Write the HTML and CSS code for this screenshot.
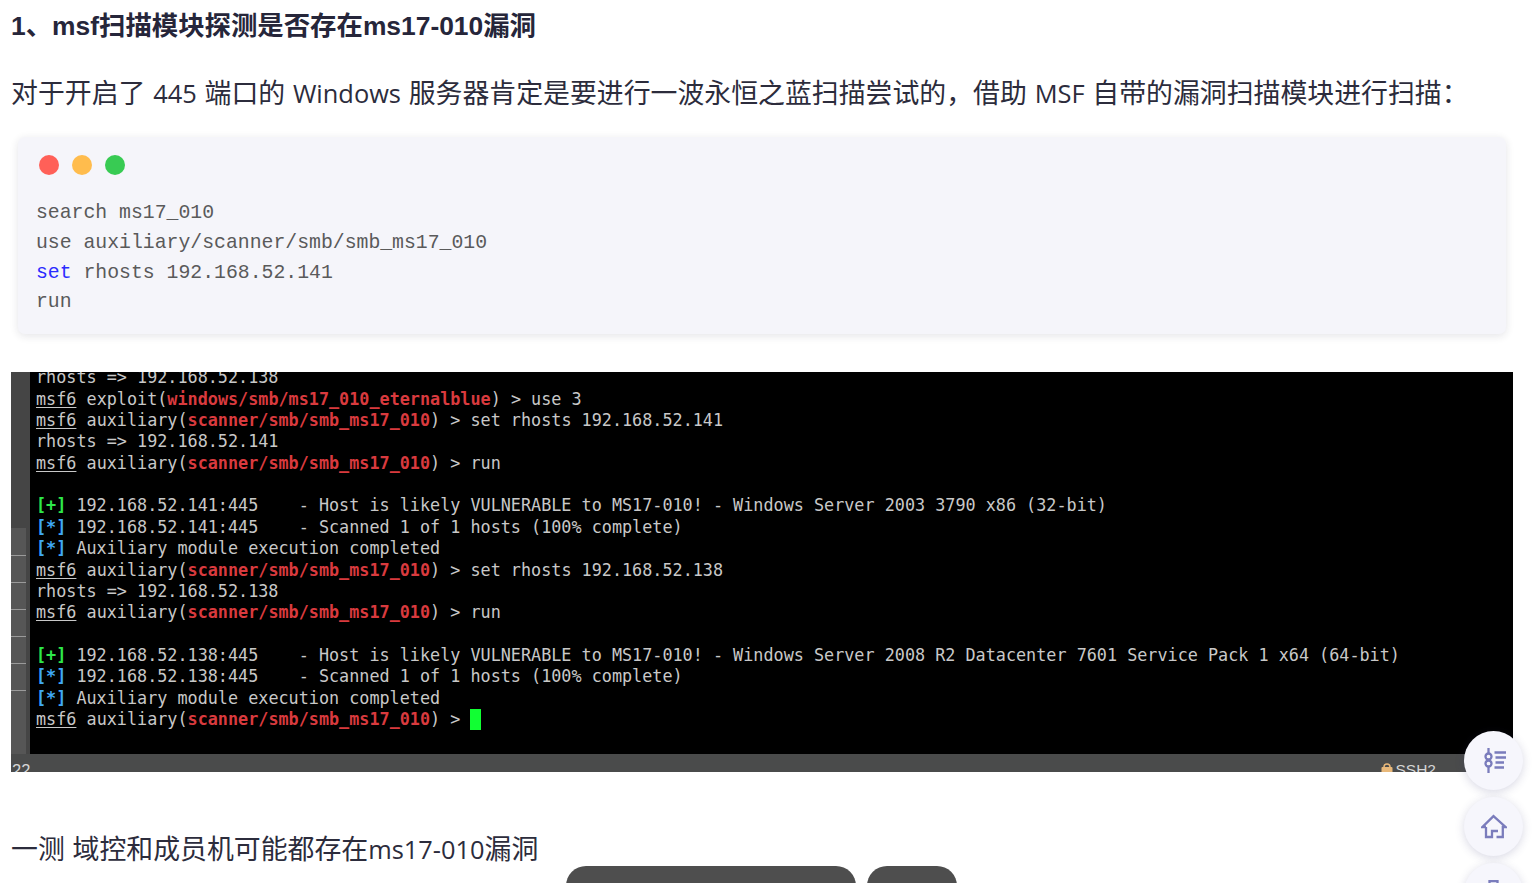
FILE: index.html
```html
<!DOCTYPE html>
<html lang="zh-CN">
<head>
<meta charset="utf-8">
<title>ms17-010</title>
<link rel="stylesheet" href="styles.css">
</head>
<body>
<main class="article">
  <h3 class="heading">1、msf扫描模块探测是否存在ms17-010漏洞</h3>
  <p class="para">对于开启了 <span class="lat">445</span> 端口的 <span class="lat">Windows</span> 服务器肯定是要进行一波永恒之蓝扫描尝试的，借助 <span class="lat">MSF</span> 自带的漏洞扫描模块进行扫描：</p>
  <div class="code-card">
    <div class="dots"><i class="dot red"></i><i class="dot yellow"></i><i class="dot green"></i></div>
    <pre class="code">search ms17_010
use auxiliary/scanner/smb/smb_ms17_010
<span class="kw">set</span> rhosts 192.168.52.141
run</pre>
  </div>
  <div class="terminal">
    <div class="term-main">
      <div class="gutter"><div class="panel"><i></i><i></i><i></i><i></i><i></i><i></i></div></div>
      <pre class="term">rhosts =&gt; 192.168.52.138
<u>msf6</u> exploit(<b class="r">windows/smb/ms17_010_eternalblue</b>) &gt; use 3
<u>msf6</u> auxiliary(<b class="r">scanner/smb/smb_ms17_010</b>) &gt; set rhosts 192.168.52.141
rhosts =&gt; 192.168.52.141
<u>msf6</u> auxiliary(<b class="r">scanner/smb/smb_ms17_010</b>) &gt; run

<b class="g">[+]</b> 192.168.52.141:445    - Host is likely VULNERABLE to MS17-010! - Windows Server 2003 3790 x86 (32-bit)
<b class="b">[*]</b> 192.168.52.141:445    - Scanned 1 of 1 hosts (100% complete)
<b class="b">[*]</b> Auxiliary module execution completed
<u>msf6</u> auxiliary(<b class="r">scanner/smb/smb_ms17_010</b>) &gt; set rhosts 192.168.52.138
rhosts =&gt; 192.168.52.138
<u>msf6</u> auxiliary(<b class="r">scanner/smb/smb_ms17_010</b>) &gt; run

<b class="g">[+]</b> 192.168.52.138:445    - Host is likely VULNERABLE to MS17-010! - Windows Server 2008 R2 Datacenter 7601 Service Pack 1 x64 (64-bit)
<b class="b">[*]</b> 192.168.52.138:445    - Scanned 1 of 1 hosts (100% complete)
<b class="b">[*]</b> Auxiliary module execution completed
<u>msf6</u> auxiliary(<b class="r">scanner/smb/smb_ms17_010</b>) &gt; <i class="cursor"></i></pre>
    </div>
    <div class="statusbar">
      <span class="st-num">22</span>
      <span class="st-ssh"><svg class="lock" viewBox="0 0 12 12"><path d="M3 5V4a3 3 0 0 1 6 0v1" fill="none" stroke="#e8b87a" stroke-width="1.5"/><rect x="0.500" y="4" width="11" height="8" rx="1" fill="#e8b87a"/></svg>SSH2</span>
    </div>
  </div>
  <p class="para para-last">一测 域控和成员机可能都存在<span class="lat">ms17-010</span>漏洞</p>
</main>
<div class="pill pill-wide"></div>
<div class="pill pill-small"></div>
<div class="fabs">
  <button class="fab" aria-label="目录"><svg viewBox="0 0 26 26" class="fab-icon"><path d="M7.500 0v25"/><circle cx="7.500" cy="8.500" r="3" fill="#f6f6fc"/><circle cx="7.500" cy="15.500" r="3" fill="#f6f6fc"/><path d="M13.500 4.500H25M14.500 9.500H25M14.500 14.500H23M13.500 19.500H23"/></svg></button>
  <button class="fab" aria-label="首页"><svg viewBox="0 0 26 26" class="fab-icon"><path d="M5 13H1.500L12.500 2.200 24.500 13H21.800V23H15.500M5 13V23H11V17H17"/></svg></button>
  <button class="fab" aria-label="分享"><svg viewBox="0 0 26 26" class="fab-icon"><path d="M8.500 8V1H16.500V8M2.800 3v5M22.800 3v5"/></svg></button>
</div>
</body>
</html>
```
FILE: styles.css
```css
html, body { margin: 0; padding: 0; }
body {
  height: 883px;
  overflow: hidden;
  background: #fff;
  color: #2c2c3c;
  font-family: Inter, "Liberation Sans", "Noto Sans CJK SC", sans-serif;
}
.article { padding: 0 11px 0 11px; width: 1502px; }
.heading {
  margin: 0;
  padding-top: 10px;
  font-family: "Liberation Sans", "Noto Sans CJK SC", sans-serif;
  font-size: 26.4px;
  line-height: 33px;
  font-weight: 700;
  color: #26263a;
}
.para {
  margin: 0;
  padding-top: 33px;
  font-family: "Open Sans", "Noto Sans CJK SC", sans-serif;
  font-size: 26.88px;
  line-height: 34px;
  color: #2c2c3c;
  word-spacing: .8px;
}
.lat { font-size: 25.4px; }
.code-card {
  margin: 27px 7px 0 7px;
  height: 197px;
  background: #f5f5fa;
  border-radius: 7px;
  box-shadow: 0 2px 8px rgba(30, 30, 60, .12);
  padding: 18px 0 0 21px;
  box-sizing: border-box;
}
.dots { display: flex; gap: 13px; }
.dot { display: block; width: 20px; height: 20px; border-radius: 50%; }
.red { background: #ff6058; }
.yellow { background: #ffbc4d; }
.green { background: #38cb53; }
.code {
  margin: 24px 0 0 -3px;
  font-family: "Liberation Mono", monospace;
  font-size: 19.8px;
  line-height: 29.8px;
  color: #5a5a5a;
}
.kw { color: #2b2bff; }
.terminal {
  margin-top: 38px;
  height: 400px;
  width: 1502px;
  background: #000;
  overflow: hidden;
  display: flex;
  flex-direction: column;
}
.term-main { flex: 1; display: flex; min-height: 0; overflow: hidden; }
.gutter { width: 19px; flex: none; background: #454545; }
.panel {
  width: 15px;
  height: 226px;
  margin-top: 156px;
  padding-top: 27px;
  box-sizing: border-box;
  background: #565656;
  display: flex;
  flex-direction: column;
  gap: 26px;
}
.panel i { display: block; height: 1px; background: #9a9a9a; }
.term {
  margin: -4.6px 0 0 6px;
  font-family: "DejaVu Sans Mono", monospace;
  font-size: 16.8px;
  line-height: 21.34px;
  color: #c8c8c8;
}
.term u { text-underline-offset: 2px; }
.r { color: #d93a3e; }
.g { color: #2ee84a; }
.b { color: #3fa9f5; }
.cursor { display: inline-block; width: 11px; height: 21px; background: #11ff33; vertical-align: -5px; }
.statusbar {
  height: 18px;
  flex: none;
  background: #4a4b4b;
  display: flex;
  justify-content: space-between;
  color: #d5d5d5;
  font-family: "Liberation Sans", sans-serif;
  line-height: 18px;
  overflow: hidden;
}
.st-num { padding: 7px 0 0 1px; font-size: 16.5px; }
.st-ssh { padding: 7px 77px 0 0; display: flex; gap: 3px; font-size: 15.5px; }
.lock { width: 12px; height: 12px; margin-top: 2px; }
.para-last { padding-top: 60px; }
.pill {
  position: absolute;
  top: 866px;
  height: 40px;
  background: #4e4e4e;
  border-radius: 24px;
}
.pill-wide { left: 566px; width: 290px; }
.pill-small { left: 867px; width: 90px; }
.fabs {
  position: absolute;
  left: 1464px;
  top: 731px;
  display: flex;
  flex-direction: column;
  gap: 7px;
}
.fab {
  width: 59px;
  height: 59px;
  padding: 0;
  border: 0;
  border-radius: 50%;
  background: #f6f6fc;
  box-shadow: 0 2px 10px rgba(60, 60, 120, .2);
  display: flex;
  align-items: center;
  justify-content: center;
}
.fab-icon { width: 26px; height: 26px; fill: none; stroke: #7a7cbc; stroke-width: 2.3; }
```
